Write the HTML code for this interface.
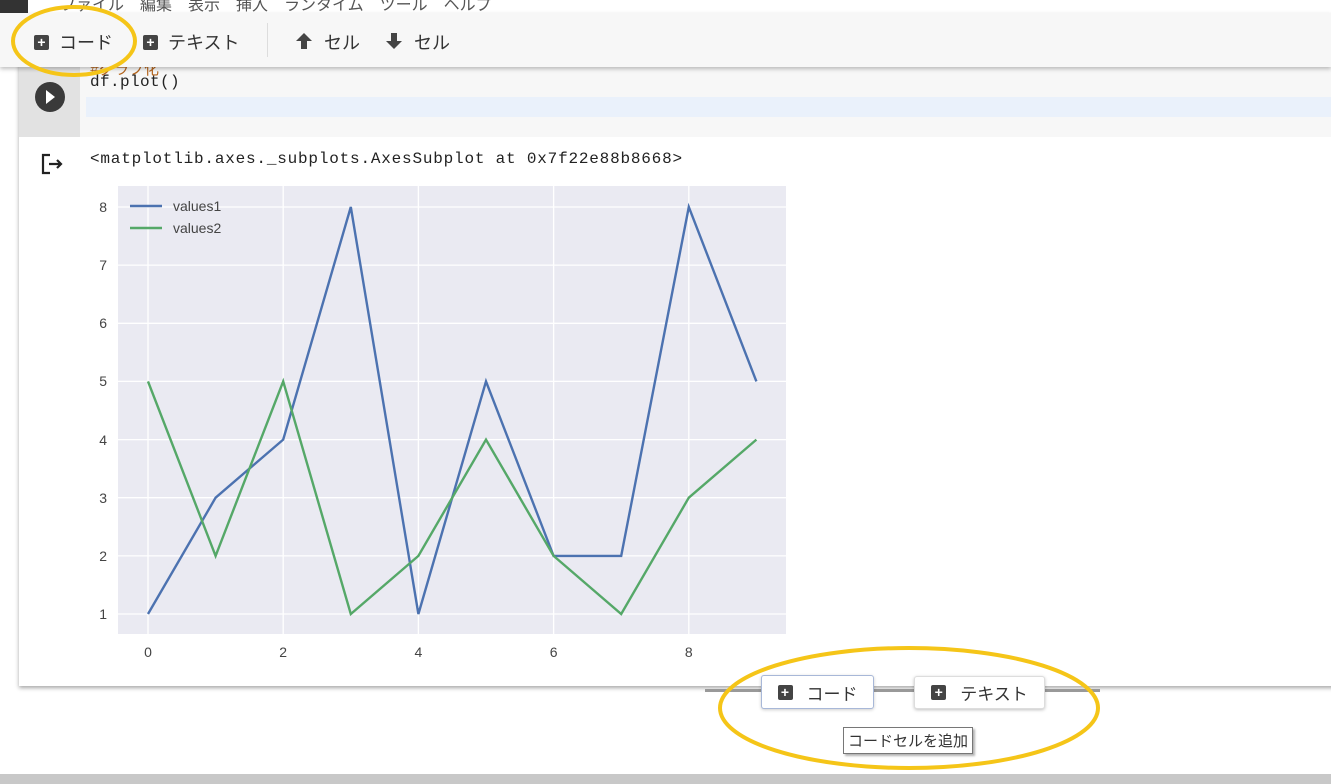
<!DOCTYPE html>
<html><head><meta charset="utf-8"><style>
body{margin:0;width:1331px;height:784px;overflow:hidden;background:#fff;position:relative;font-family:"Liberation Sans","Noto Sans CJK JP",sans-serif}
.a{position:absolute}
.tb{font-size:18px;color:#333;display:flex;align-items:center}
.pl{display:inline-block;width:15px;height:15px;background:#444;border-radius:2px;color:#fff;font-size:14px;line-height:15px;text-align:center;font-weight:bold;margin-right:10px}
.mono{font-family:"Liberation Mono",monospace}
</style></head><body>
<div class="a" style="left:0;top:0;width:28px;height:13px;background:#333"></div>
<div class="a" style="left:60px;top:-9px;font-size:16px;color:#555">ファイル　編集　表示　挿入　ランタイム　ツール　ヘルプ</div>
<!-- cell -->
<div class="a" style="left:19px;top:60px;width:1320px;height:626px;background:#fff;box-shadow:0 2px 4px rgba(0,0,0,.35)"></div>
<div class="a" style="left:19px;top:60px;width:61px;height:77px;background:#e2e2e2"></div>
<div class="a" style="left:80px;top:60px;width:1251px;height:77px;background:#f7f7f7"></div>
<div class="a" style="left:86px;top:97px;width:1245px;height:20px;background:#eaf1fb"></div>
<div class="a" style="left:35px;top:82px;width:30px;height:30px;border-radius:50%;background:#3a3a3a"></div>
<div class="a" style="left:46px;top:90px;width:0;height:0;border-left:9px solid #fff;border-top:7px solid transparent;border-bottom:7px solid transparent"></div>
<div class="a mono" style="left:90px;top:58px;font-size:15px;color:#b5651d">#グラフ化</div>
<div class="a mono" style="left:90px;top:73px;font-size:16px;color:#222;letter-spacing:0.4px">df.plot()</div>
<!-- toolbar -->
<div class="a" style="left:0;top:13px;width:1331px;height:54px;background:#f7f7f7;box-shadow:0 2px 4px rgba(0,0,0,.25)"></div>
<div class="a tb" style="left:34px;top:29px"><span class="pl">+</span>コード</div>
<div class="a tb" style="left:143px;top:29px"><span class="pl">+</span>テキスト</div>
<div class="a" style="left:267px;top:23px;width:1px;height:34px;background:#ddd"></div>
<svg class="a" style="left:295px;top:32px" width="18" height="18"><path d="M9 1L17 9H12V17H6V9H1Z" fill="#444"/></svg>
<div class="a tb" style="left:324px;top:29px">セル</div>
<svg class="a" style="left:385px;top:32px" width="18" height="18"><path d="M9 17L17 9H12V1H6V9H1Z" fill="#444"/></svg>
<div class="a tb" style="left:414px;top:29px">セル</div>
<svg class="a" style="left:0;top:0" width="140" height="90"><ellipse cx="74" cy="41" rx="61" ry="34" fill="none" stroke="#f5c518" stroke-width="4"/></svg>
<!-- output -->
<svg class="a" style="left:40px;top:153px" width="26" height="22"><path d="M10 2H3V20H10M9 11H21M17 7L21 11L17 15" fill="none" stroke="#222" stroke-width="2.2"/></svg>
<div class="a mono" style="left:90px;top:150px;font-size:16px;color:#222;letter-spacing:0.8px">&lt;matplotlib.axes._subplots.AxesSubplot at 0x7f22e88b8668&gt;</div>
<svg class="a" style="left:0;top:0" width="800" height="680" font-family="Liberation Sans" font-size="14" fill="#444">
<rect x="118" y="186" width="668" height="448" fill="#eaeaf2"/>
<g stroke="#fff" stroke-width="1.3">
<line x1="148" y1="186" x2="148" y2="634"/><line x1="283.2" y1="186" x2="283.2" y2="634"/><line x1="418.4" y1="186" x2="418.4" y2="634"/><line x1="553.6" y1="186" x2="553.6" y2="634"/><line x1="688.8" y1="186" x2="688.8" y2="634"/>
<line x1="118" y1="614" x2="786" y2="614"/><line x1="118" y1="555.9" x2="786" y2="555.9"/><line x1="118" y1="497.7" x2="786" y2="497.7"/><line x1="118" y1="439.6" x2="786" y2="439.6"/><line x1="118" y1="381.4" x2="786" y2="381.4"/><line x1="118" y1="323.3" x2="786" y2="323.3"/><line x1="118" y1="265.1" x2="786" y2="265.1"/><line x1="118" y1="207" x2="786" y2="207"/>
</g>
<polyline fill="none" stroke="#4c72b0" stroke-width="2.4" points="148,614 215.6,497.7 283.2,439.6 350.8,207 418.4,614 486,381.4 553.6,555.9 621.2,555.9 688.8,207 756.4,381.4"/>
<polyline fill="none" stroke="#55a868" stroke-width="2.4" points="148,381.4 215.6,555.9 283.2,381.4 350.8,614 418.4,555.9 486,439.6 553.6,555.9 621.2,614 688.8,497.7 756.4,439.6"/>
<g text-anchor="end"><text x="107" y="619">1</text><text x="107" y="561">2</text><text x="107" y="503">3</text><text x="107" y="445">4</text><text x="107" y="386">5</text><text x="107" y="328">6</text><text x="107" y="270">7</text><text x="107" y="212">8</text></g>
<g text-anchor="middle"><text x="148" y="657">0</text><text x="283.2" y="657">2</text><text x="418.4" y="657">4</text><text x="553.6" y="657">6</text><text x="688.8" y="657">8</text></g>
<line x1="130" y1="206" x2="162" y2="206" stroke="#4c72b0" stroke-width="2.4"/><line x1="130" y1="228" x2="162" y2="228" stroke="#55a868" stroke-width="2.4"/>
<text x="173" y="211" font-size="14">values1</text><text x="173" y="233" font-size="14">values2</text>
</svg>
<!-- add bar -->
<div class="a" style="left:705px;top:689px;width:395px;height:3px;background:#999"></div>
<div class="a tb" style="left:761px;top:675px;width:111px;height:32px;background:#fff;border:1px solid #a8b8d8;border-radius:3px;box-shadow:0 1px 3px rgba(0,0,0,.2);justify-content:center;font-size:17px"><span class="pl" style="margin-right:14px">+</span>コード</div>
<div class="a tb" style="left:914px;top:676px;width:129px;height:31px;background:#fff;border:1px solid #ddd;border-radius:3px;box-shadow:0 1px 3px rgba(0,0,0,.25);justify-content:center;font-size:17px"><span class="pl" style="margin-right:14px">+</span>テキスト</div>
<div class="a" style="left:843px;top:727px;padding:2px 4px;border:1px solid #777;background:#fff;box-shadow:2px 2px 2px rgba(0,0,0,.3);font-size:15px;color:#333">コードセルを追加</div>
<svg class="a" style="left:700px;top:630px" width="420" height="154"><ellipse cx="209" cy="78" rx="189" ry="60" fill="none" stroke="#f5c518" stroke-width="4"/></svg>
<div class="a" style="left:0;top:774px;width:1331px;height:10px;background:#c8c8c8"></div>
</body></html>
